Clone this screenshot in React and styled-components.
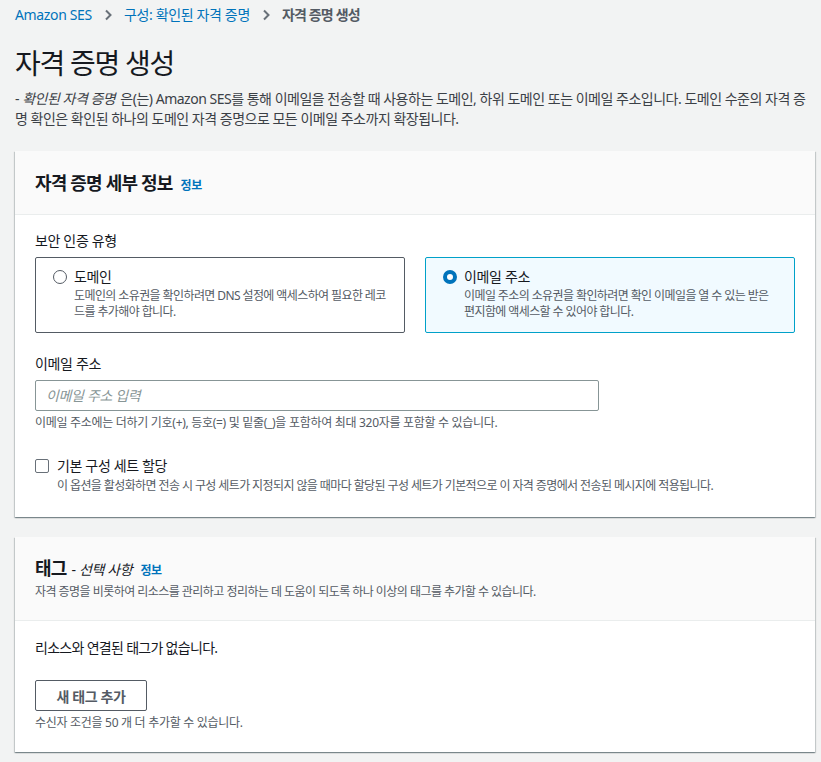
import React from "react";
import styled, { createGlobalStyle } from "styled-components";

const GlobalStyle = createGlobalStyle`
	html, body {
		margin: 0;
		padding: 0;
		background: #f2f3f3;
	}
	body {
		font-family: "Noto Sans", "Noto Sans CJK KR", sans-serif;
		font-size: 14px;
		line-height: 20px;
		color: #16191f;
	}
	* {
		letter-spacing: -0.025em;
	}
`;

const Page = styled.div`
	padding: 5px 6px 10px 15px;
	display: flex;
	flex-direction: column;
`;

const Breadcrumbs = styled.nav`
	display: flex;
	align-items: center;
	gap: 10px;
	font-size: 14px;
	line-height: 20px;
`;

const Crumb = styled.span`
	color: ${(props) => (props.current ? "#545b64" : "#0073bb")};
	font-weight: ${(props) => (props.current ? 700 : 400)};
	letter-spacing: ${(props) => (props.current ? "-0.06em" : "-0.025em")};
`;

const Chevron = styled.svg`
	width: 12px;
	height: 12px;
	fill: none;
	stroke: #687078;
	stroke-width: 2px;
`;

const Title = styled.h1`
	margin: 20px 0 0;
	font-size: 28px;
	line-height: 36px;
	font-weight: 400;
	letter-spacing: -0.045em;
	color: #16191f;
`;

const Description = styled.p`
	margin: 8px 0 0;
	font-size: 14px;
	line-height: 20px;
	color: #3b4046;
	word-break: break-all;

	&,
	em {
		letter-spacing: -0.035em;
	}

	em {
		font-style: italic;
		margin-right: 2px;
	}
`;

const Card = styled.section`
	margin-top: ${(props) => props.$top || 20}px;
	background: #ffffff;
	box-shadow: 0 1px 1px 0 rgba(0, 28, 36, 0.3), 1px 1px 1px 0 rgba(0, 28, 36, 0.15),
		-1px 1px 1px 0 rgba(0, 28, 36, 0.15);
`;

const CardHeader = styled.header`
	background: #fafafa;
	border-bottom: 1px solid #eaeded;
	padding: ${(props) => (props.$compact ? "19px 20px 20px" : "20px 20px 19px")};
`;

const CardTitle = styled.h2`
	margin: 0;
	font-size: 18px;
	line-height: 24px;
	height: 24px;
	font-weight: 700;
	letter-spacing: -0.045em;
	color: #16191f;
`;

const Optional = styled.span`
	margin-left: 5px;
	font-size: 14px;
	line-height: 16px;
	font-weight: 400;

	em {
		font-style: italic;
	}
`;

const InfoLink = styled.a`
	margin-left: 8px;
	font-size: 12px;
	line-height: 16px;
	font-weight: 700;
	color: #0073bb;
	text-decoration: none;
`;

const HeaderDesc = styled.p`
	margin: 4px 0 0;
	font-size: 12px;
	line-height: 16px;
	letter-spacing: -0.045em;
	color: #545b64;
`;

const CardBody = styled.div`
	padding: ${(props) => props.$pad || "16px 20px 23px"};
	display: flex;
	flex-direction: column;
`;

const Label = styled.div`
	font-size: 14px;
	line-height: 20px;
	color: #16191f;
`;

const TileGrid = styled.div`
	margin-top: 6px;
	display: grid;
	grid-template-columns: 1fr 1fr;
	gap: 20px;
`;

const Tile = styled.label`
	display: flex;
	gap: 7px;
	padding: 9px 16px 10px 17px;
	border: 1px solid ${(props) => (props.$checked ? "#00a1c9" : "#545b64")};
	border-radius: 2px;
	background: ${(props) => (props.$checked ? "#f1faff" : "#ffffff")};
	min-height: 55px;
`;

const Radio = styled.span`
	flex: none;
	box-sizing: border-box;
	width: 14px;
	height: 14px;
	margin-top: 3px;
	border-radius: 50%;
	border: ${(props) => (props.$checked ? "4px solid #0073bb" : "1px solid #545b64")};
	background: #ffffff;
`;

const TileText = styled.div`
	display: flex;
	flex-direction: column;
`;

const TileTitle = styled.span`
	font-size: 14px;
	line-height: 20px;
	color: #16191f;
`;

const SmallText = styled.span`
	font-size: 12px;
	line-height: 16px;
	color: #545b64;
	word-break: break-all;
	letter-spacing: ${(props) => (props.$tight ? "-0.05em" : "-0.025em")};
	margin-top: ${(props) => props.$mt || 0}px;
`;

const Field = styled.div`
	margin-top: ${(props) => props.$mt || 0}px;
	display: flex;
	flex-direction: column;
`;

const Input = styled.input`
	margin-top: 6px;
	width: 564px;
	height: 31px;
	box-sizing: border-box;
	padding: 4px 10px;
	border: 1px solid #879596;
	border-radius: 2px;
	font-family: inherit;
	font-size: 14px;
	color: #16191f;
	outline: none;

	&::placeholder {
		color: #879596;
		font-style: italic;
	}
`;

const CheckRow = styled.label`
	display: flex;
	gap: 8px;
`;

const Checkbox = styled.span`
	flex: none;
	box-sizing: border-box;
	width: 14px;
	height: 14px;
	margin-top: 3px;
	border: 1px solid #687078;
	border-radius: 2px;
	background: #ffffff;
`;

const BodyText = styled.p`
	margin: 0;
	font-size: 14px;
	line-height: 20px;
	letter-spacing: -0.05em;
	color: #16191f;
`;

const Button = styled.button`
	margin-top: 22px;
	align-self: flex-start;
	width: 112px;
	height: 31px;
	box-sizing: border-box;
	border: 1px solid #545b64;
	border-radius: 2px;
	background: #ffffff;
	font-family: inherit;
	font-size: 14px;
	font-weight: 700;
	color: #545b64;
	cursor: pointer;
`;

const ChevronIcon = () => (
	<Chevron viewBox="0 0 12 12">
		<polyline points="4 1.5 8.5 6 4 10.5" />
	</Chevron>
);

export default function App() {
	return (
		<>
			<GlobalStyle />
			<Page>
				<Breadcrumbs>
					<Crumb>Amazon SES</Crumb>
					<ChevronIcon />
					<Crumb>구성: 확인된 자격 증명</Crumb>
					<ChevronIcon />
					<Crumb current>자격 증명 생성</Crumb>
				</Breadcrumbs>

				<Title>자격 증명 생성</Title>
				<Description>
					- <em>확인된 자격 증명</em> 은(는) Amazon SES를 통해 이메일을 전송할 때 사용하는 도메인, 하위 도메인 또는
					이메일 주소입니다. 도메인 수준의 자격 증명 확인은 확인된 하나의 도메인 자격 증명으로 모든 이메일 주소까지
					확장됩니다.
				</Description>

				<Card $top={22}>
					<CardHeader>
						<CardTitle>
							자격 증명 세부 정보
							<InfoLink>정보</InfoLink>
						</CardTitle>
					</CardHeader>
					<CardBody>
						<Label>보안 인증 유형</Label>
						<TileGrid>
							<Tile>
								<Radio />
								<TileText>
									<TileTitle>도메인</TileTitle>
									<SmallText $mt={1} $tight>
										도메인의 소유권을 확인하려면 DNS 설정에 액세스하여 필요한 레코드를 추가해야 합니다.
									</SmallText>
								</TileText>
							</Tile>
							<Tile $checked>
								<Radio $checked />
								<TileText>
									<TileTitle>이메일 주소</TileTitle>
									<SmallText $mt={1} $tight>
										이메일 주소의 소유권을 확인하려면 확인 이메일을 열 수 있는 받은 편지함에 액세스할 수 있어야
										합니다.
									</SmallText>
								</TileText>
							</Tile>
						</TileGrid>

						<Field $mt={21}>
							<Label>이메일 주소</Label>
							<Input placeholder="이메일 주소 입력" />
							<SmallText $mt={4}>
								이메일 주소에는 더하기 기호(+), 등호(=) 및 밑줄(_)을 포함하여 최대 320자를 포함할 수 있습니다.
							</SmallText>
						</Field>

						<Field $mt={25}>
							<CheckRow>
								<Checkbox />
								<TileText>
									<TileTitle>기본 구성 세트 할당</TileTitle>
									<SmallText $mt={2} $tight>
										이 옵션을 활성화하면 전송 시 구성 세트가 지정되지 않을 때마다 할당된 구성 세트가 기본적으로 이
										자격 증명에서 전송된 메시지에 적용됩니다.
									</SmallText>
								</TileText>
							</CheckRow>
						</Field>
					</CardBody>
				</Card>

				<Card>
					<CardHeader $compact>
						<CardTitle>
							태그
							<Optional>
								- <em>선택 사항</em>
							</Optional>
							<InfoLink>정보</InfoLink>
						</CardTitle>
						<HeaderDesc>
							자격 증명을 비롯하여 리소스를 관리하고 정리하는 데 도움이 되도록 하나 이상의 태그를 추가할 수 있습니다.
						</HeaderDesc>
					</CardHeader>
					<CardBody $pad="17px 20px 21px">
						<BodyText>리소스와 연결된 태그가 없습니다.</BodyText>
						<Button>새 태그 추가</Button>
						<SmallText $mt={4}>수신자 조건을 50 개 더 추가할 수 있습니다.</SmallText>
					</CardBody>
				</Card>
			</Page>
		</>
	);
}
